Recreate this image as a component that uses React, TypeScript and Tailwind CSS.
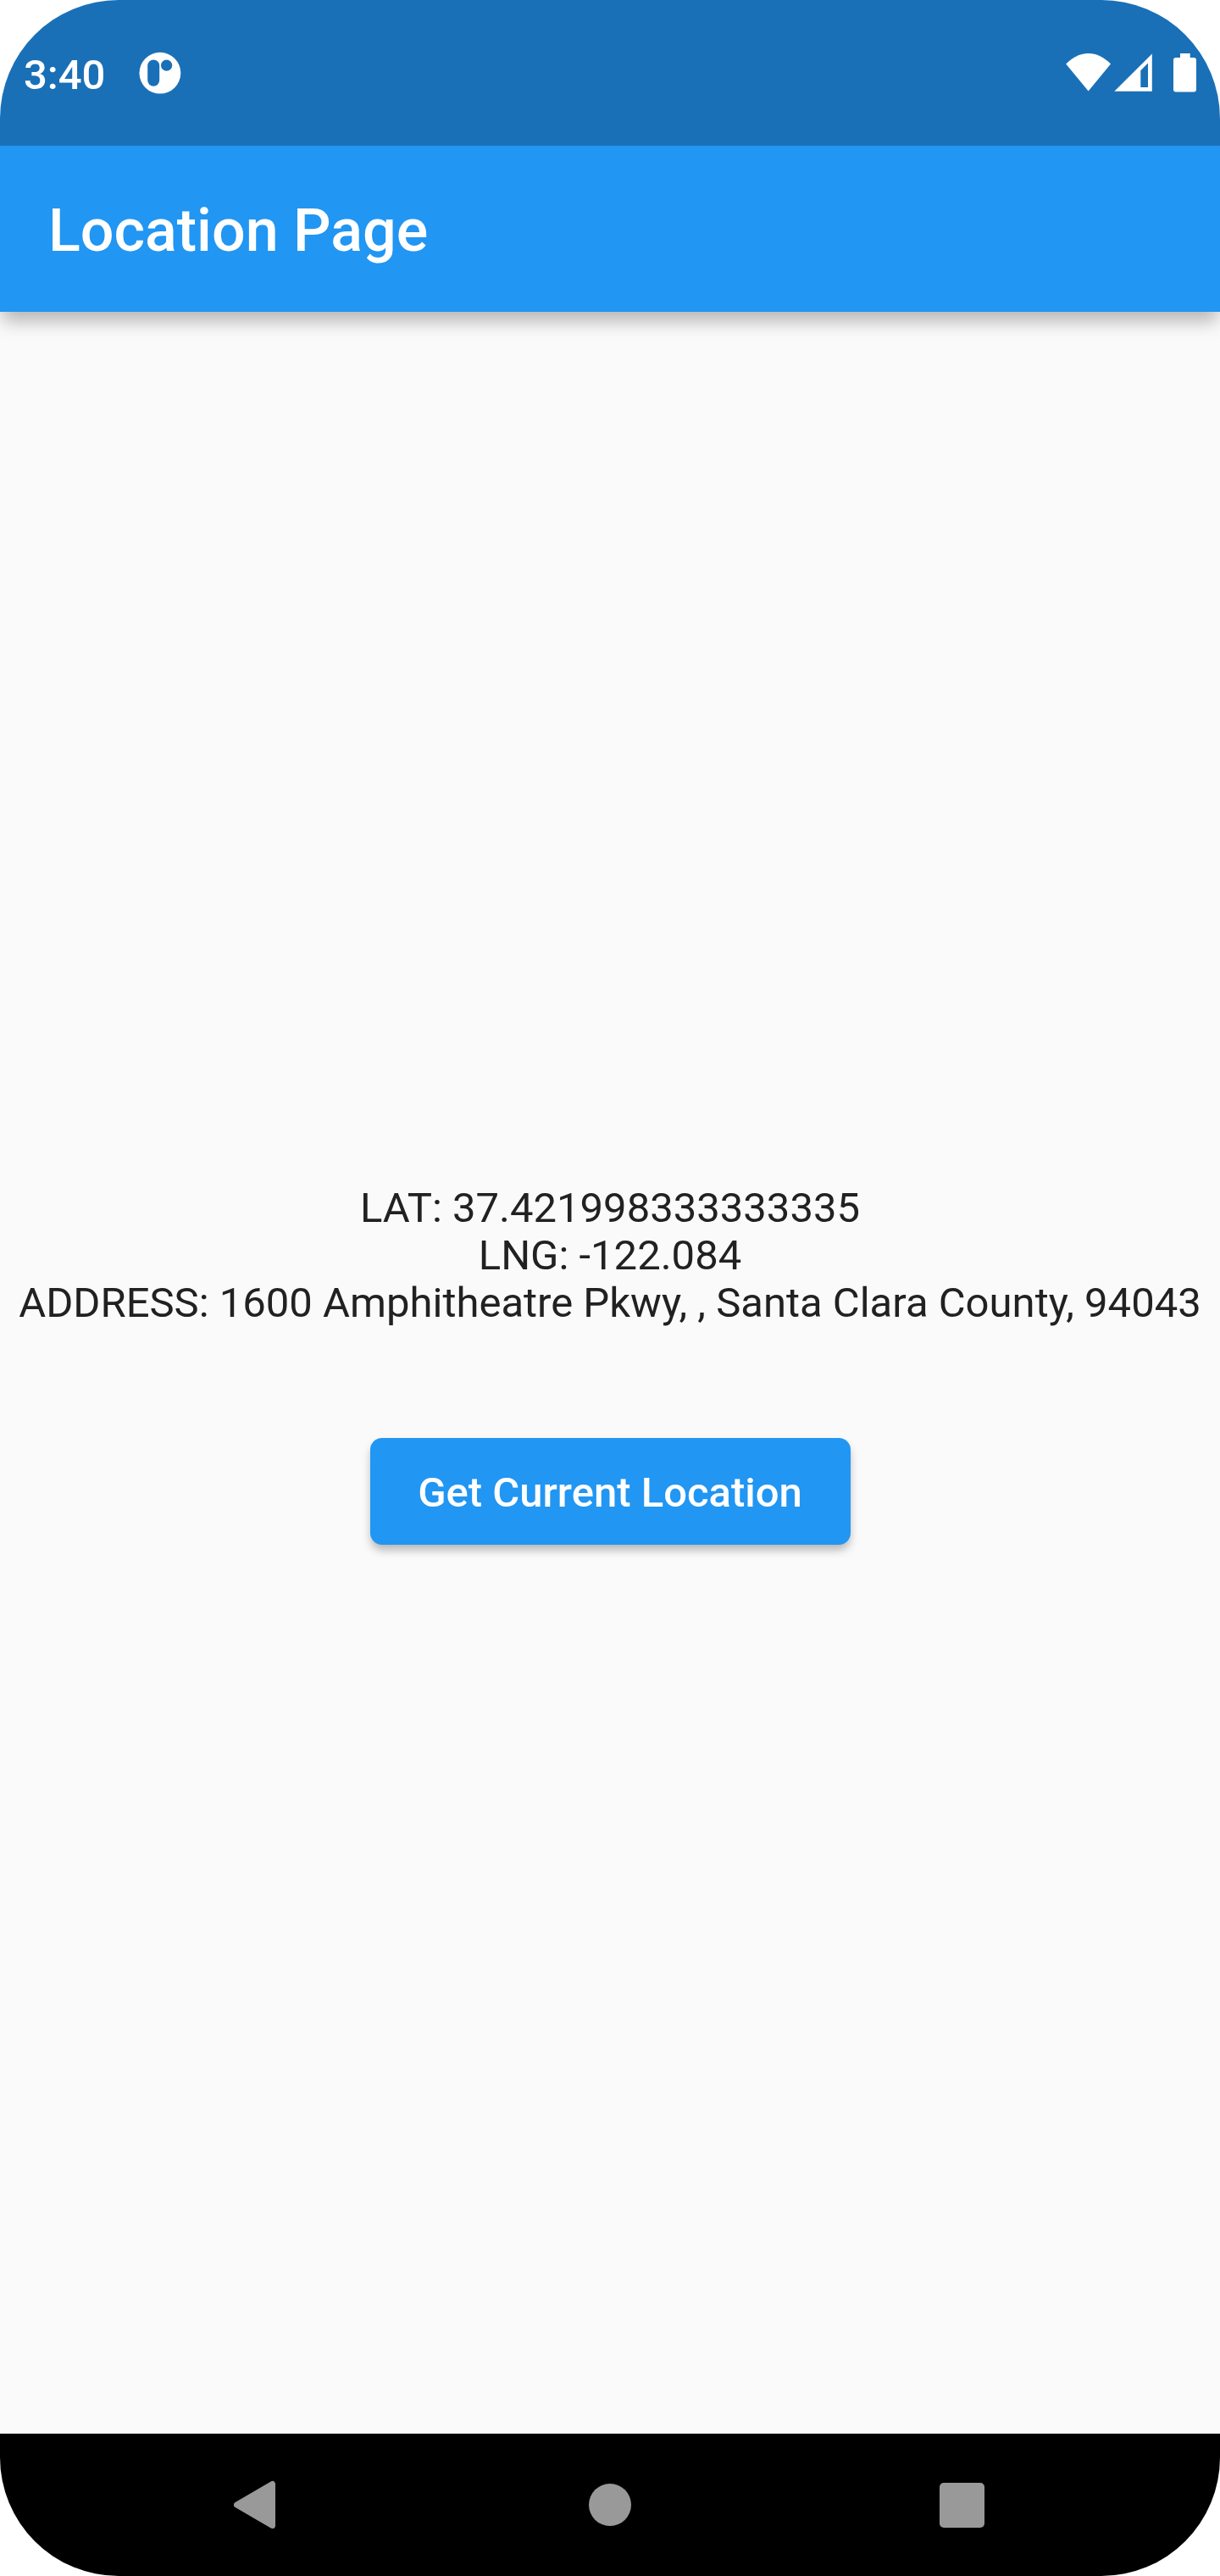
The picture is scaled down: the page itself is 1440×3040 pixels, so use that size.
function StatusBar() {
  return (
    <div className="relative z-10 flex h-[172px] items-center bg-[#1a70b7] px-7 text-white">
      <span className="pt-1 text-[49px] font-medium leading-none">3:40</span>
      <svg className="ml-[39.5px]" width="50" height="50" viewBox="163.5 61.2 50 50" fill="white">
        <circle cx="188.4" cy="86.4" r="24.4" />
        <rect x="173.7" y="70.7" width="14" height="31.3" rx="7" fill="#1a70b7" />
        <circle cx="196.1" cy="77.4" r="6.6" fill="#1a70b7" />
      </svg>
      <svg className="ml-auto" width="154" height="50" viewBox="1258 61 154 50" fill="white">
        <path d="M1284.6 107.4 1258.2 75.4C1266 67.5 1275 63 1284.6 63S1303 67.5 1311 75.4Z" />
        <path fillRule="evenodd" d="M1315.3 107.8 1359.8 63.4V107.8ZM1346.3 83.2V103H1355V74.4Z" />
        <path d="M1393 63h11.7v5h4.3a3 3 0 0 1 3 3v34.6a3 3 0 0 1-3 3h-21a3 3 0 0 1-3-3V71a3 3 0 0 1 3-3h5Z" />
      </svg>
    </div>
  );
}

function NavBar() {
  return (
    <nav className="flex h-[168px] items-center bg-black pl-[276px]">
      <svg width="50" height="58" viewBox="0 0 50 58" fill="#999" stroke="#999" strokeWidth="7" strokeLinejoin="round">
        <path d="M3.5 29 45.5 4.5V53.5Z" />
      </svg>
      <div className="ml-[369px] size-[50px] rounded-full bg-[#999]" />
      <div className="ml-[364px] size-[53px] rounded-[5px] bg-[#999]" />
    </nav>
  );
}

export default function App() {
  return (
    <div className="h-[3040px] w-[1440px] bg-white font-['Roboto',sans-serif]">
      <div className="flex h-full flex-col overflow-hidden rounded-[140px] bg-[#fafafa]">
        <StatusBar />
        <header className="flex h-[196px] items-center bg-[#2196f3] px-[57px] shadow-[0_14px_20px_-3px_rgba(0,0,0,0.28)]">
          <h1 className="pt-1 text-[70px] font-medium leading-none text-white">Location Page</h1>
        </header>
        <main className="flex flex-1 flex-col items-center pt-[1030px]">
          <div className="whitespace-nowrap text-center text-[49px] leading-[56px] text-[#212121]">
            <p>LAT: 37.421998333333335</p>
            <p>LNG: -122.084</p>
            <p>ADDRESS: 1600 Amphitheatre Pkwy, , Santa Clara County, 94043</p>
          </div>
          <button className="mt-[131px] h-[126px] w-[567px] rounded-[14px] bg-[#2196f3] pt-[3px] text-[49px] font-medium text-white shadow-[0_7px_11px_-1px_rgba(0,0,0,0.28)]">
            Get Current Location
          </button>
        </main>
        <NavBar />
      </div>
    </div>
  );
}
